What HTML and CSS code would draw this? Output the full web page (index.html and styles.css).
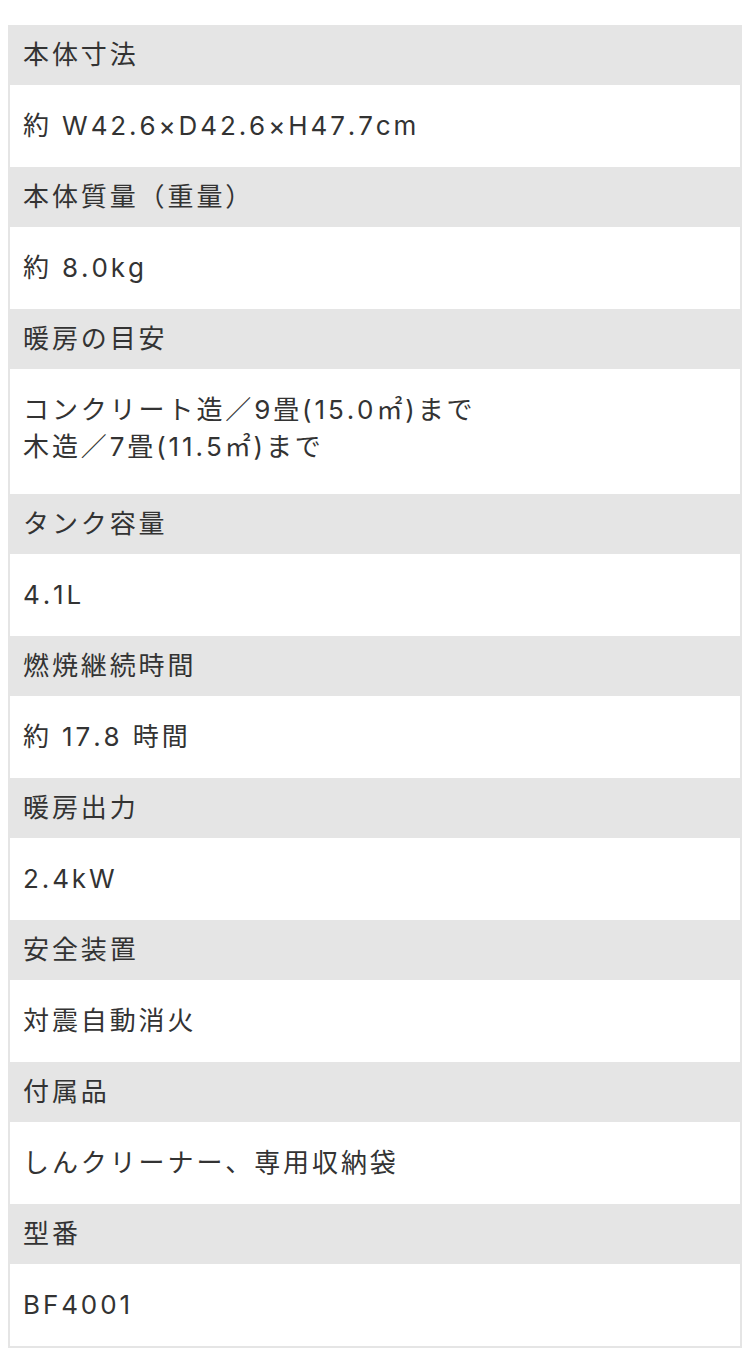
FILE: index.html
```html
<!DOCTYPE html>
<html lang="ja">
<head>
<meta charset="utf-8">
<title>仕様</title>
<link rel="stylesheet" href="styles.css">
</head>
<body>
<dl class="spec">
  <dt class="spec-label">本体寸法</dt>
  <dd class="spec-value">約 W42.6×D42.6×H47.7cm</dd>
  <dt class="spec-label">本体質量（重量）</dt>
  <dd class="spec-value">約 8.0kg</dd>
  <dt class="spec-label">暖房の目安</dt>
  <dd class="spec-value spec-value-multi">コンクリート造／9畳(15.0㎡)まで<br>木造／7畳(11.5㎡)まで</dd>
  <dt class="spec-label">タンク容量</dt>
  <dd class="spec-value">4.1L</dd>
  <dt class="spec-label">燃焼継続時間</dt>
  <dd class="spec-value">約 17.8 時間</dd>
  <dt class="spec-label">暖房出力</dt>
  <dd class="spec-value">2.4kW</dd>
  <dt class="spec-label">安全装置</dt>
  <dd class="spec-value">対震自動消火</dd>
  <dt class="spec-label">付属品</dt>
  <dd class="spec-value">しんクリーナー、専用収納袋</dd>
  <dt class="spec-label">型番</dt>
  <dd class="spec-value spec-last">BF4001</dd>
</dl>
</body>
</html>
```
FILE: styles.css
```css
html, body {
  margin: 0;
  padding: 0;
  background: #ffffff;
}
body {
  padding: 25px 8px 0 8px;
  font-family: "Inter", "Noto Sans CJK JP", sans-serif;
  color: #333333;
  font-kerning: none;
}
.spec {
  margin: 0;
  width: 734px;
  display: flex;
  flex-direction: column;
}
.spec-label {
  margin: 0;
  background: #e5e5e5;
  font-size: 26px;
  font-weight: 400;
  letter-spacing: 2.9px;
  line-height: 36px;
  padding: 12px 15px;
}
.spec-value {
  margin: 0;
  background: #ffffff;
  border-left: 2px solid #e5e5e5;
  border-right: 2px solid #e5e5e5;
  font-size: 26px;
  font-weight: 400;
  letter-spacing: 2.9px;
  line-height: 38px;
  padding: 22px 13px;
}
.spec-value-multi {
  line-height: 37px;
  padding: 22px 13px 29px;
}
.spec-last {
  border-bottom: 2px solid #e5e5e5;
}
```
